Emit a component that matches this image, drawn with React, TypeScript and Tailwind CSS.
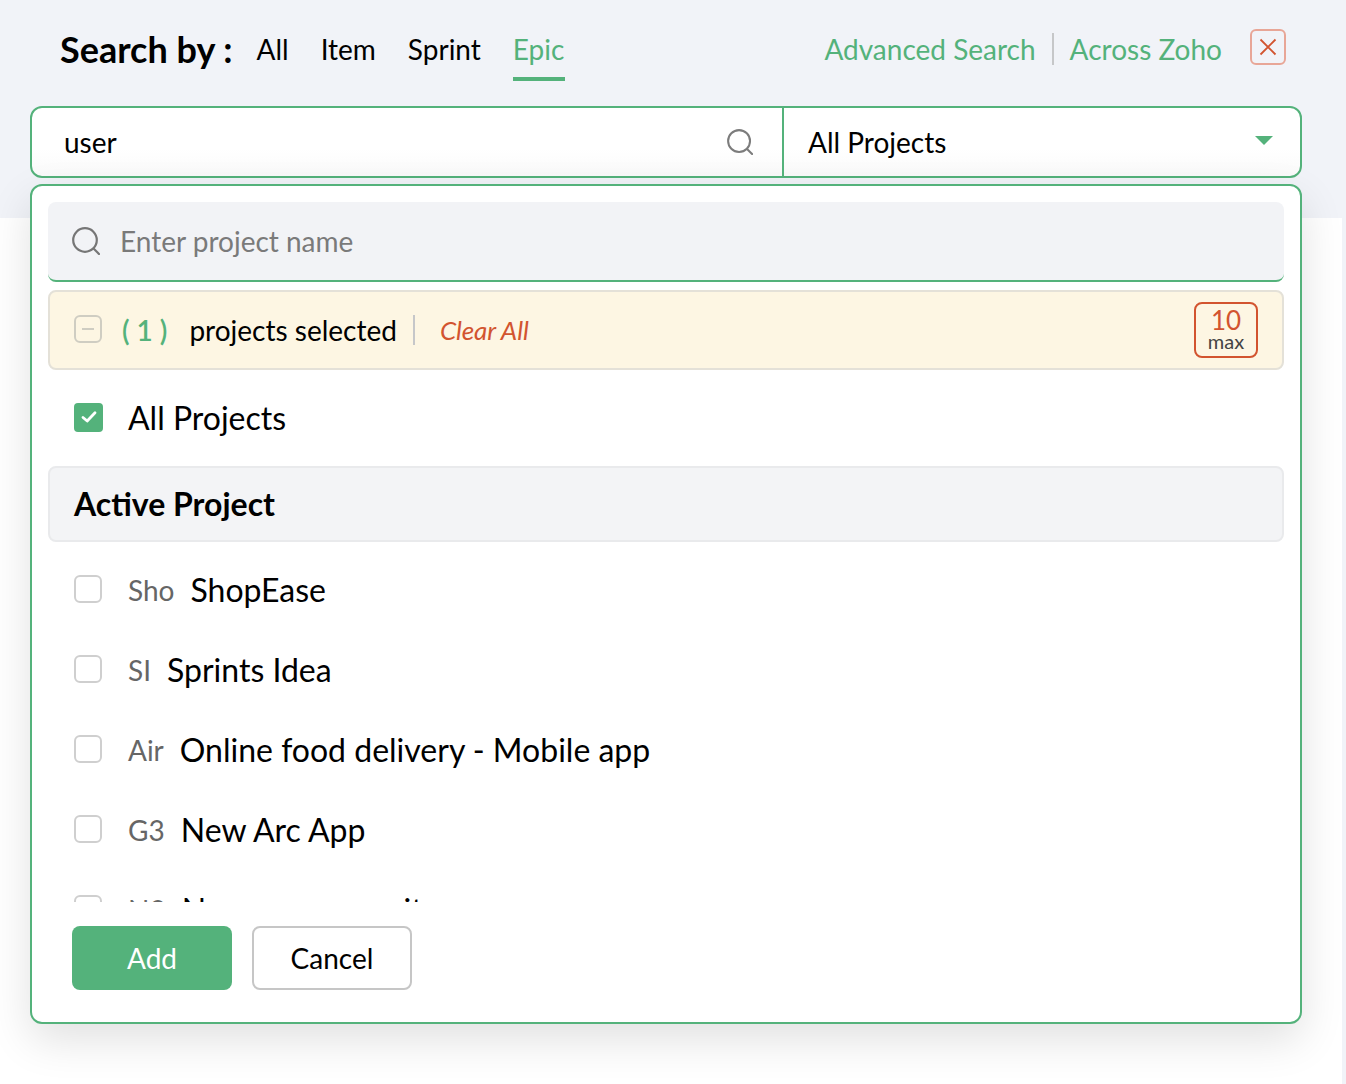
import React from "react";

const Search = ({ size, color }: { size: number; color: string }) => (
  <svg width={size} height={size} viewBox="0 0 28 28" fill="none" stroke={color} strokeWidth="2.2" strokeLinecap="round">
    <circle cx="13" cy="13" r="11.8" />
    <path d="M21.8 21.8 L27 27" />
  </svg>
);

const rows = [
  ["Sho", "ShopEase"],
  ["SI", "Sprints Idea"],
  ["Air", "Online food delivery - Mobile app"],
  ["G3", "New Arc App"],
  ["N3", "New company site"],
];

export default function App() {
  return (
    <div className="relative h-[1084px] w-[1346px] overflow-hidden bg-white font-['Lato','Liberation_Sans',sans-serif] text-black">
      <div className="absolute inset-x-0 top-0 h-[218px] bg-[#f1f3f8]" />
      <div className="absolute inset-y-0 right-0 w-1 bg-[#f1f3f8]" />
      <div className="relative px-[30px]">
        <div className="flex h-[106px] items-start">
          <span className="ml-[30px] mt-[26px] text-[36px] leading-[46px] font-bold">Search by :</span>
          <div className="ml-[24px] flex gap-[32px] text-[28px] leading-[36px]">
            <span className="mt-[31px]">All</span>
            <span className="mt-[31px]">Item</span>
            <span className="mt-[31px]">Sprint</span>
            <span className="mt-[31px] flex h-[50px] w-[52px] flex-col border-b-4 border-[#54b27b] text-[#54b27b]">Epic</span>
          </div>
          <div className="ml-auto mt-[31px] flex items-center text-[28px] leading-[36px] text-[#54b27b]">
            <span>Advanced Search</span>
            <span className="mx-4 h-8 w-0.5 bg-[#c6c7c9]" />
            <span>Across Zoho</span>
          </div>
          <div className="ml-[28px] mr-[30px] mt-[29px] flex h-9 w-9 items-center justify-center rounded-md border-2 border-[#e8a697]">
            <svg width="18" height="18" viewBox="0 0 18 18" stroke="#d2542f" strokeWidth="1.8" fill="none">
              <path d="M1.5 1.5 L16.5 16.5 M16.5 1.5 L1.5 16.5" />
            </svg>
          </div>
        </div>

        <div className="flex h-[72px] w-[1272px] rounded-xl border-2 border-[#54b27b] bg-gradient-to-b from-white from-60% to-[#fafafa]">
          <div className="flex w-[752px] items-center justify-between border-r-2 border-[#54b27b] pl-8 pr-[29px]">
            <span className="text-[28px] leading-9">user</span>
            <Search size={26} color="#7c7c7c" />
          </div>
          <div className="flex flex-1 items-center justify-between pl-6 pr-[27px]">
            <span className="text-[28px] leading-9">All Projects</span>
            <span className="mb-1 h-0 w-0 border-x-[9px] border-t-[9px] border-x-transparent border-t-[#54b27b]" />
          </div>
        </div>

        <div className="mt-[6px] flex h-[840px] w-[1272px] flex-col rounded-xl border-2 border-[#54b27b] bg-white px-4 pt-4 pb-[32px] shadow-[0_16px_44px_rgba(0,0,0,0.12)]">
          <div className="flex h-20 shrink-0 items-center gap-[20px] rounded-lg border-b-2 border-[#54b27b] bg-[#f2f3f6] pl-[24px]">
            <Search size={28} color="#767676" />
            <span className="text-[28px] leading-9 text-[#7a7a7a]">Enter project name</span>
          </div>
          <div className="mt-2 flex h-20 shrink-0 items-center rounded-lg border-2 border-[#e4e1d8] bg-[#fdf6e3] pl-6 pr-6">
            <span className="mb-0.5 flex h-7 w-7 items-center justify-center rounded-md border-2 border-[#cfcdc2]">
              <span className="h-0.5 w-3 bg-[#cfcdc2]" />
            </span>
            <span className="ml-5 text-[28px] leading-9 font-semibold whitespace-pre text-[#54b27b]">( 1 )</span>
            <span className="ml-[22px] text-[28px] leading-9">projects selected</span>
            <span className="ml-4 h-[30px] w-0.5 bg-[#c6c7c9]" />
            <span className="ml-[25px] text-[26px] leading-9 italic tracking-[-0.1px] text-[#d2542f]">Clear All</span>
            <div className="ml-auto flex h-14 w-16 flex-col items-center justify-center rounded-lg border-2 border-[#d2542f]">
              <span className="text-[26px] leading-[24px] text-[#d2542f]">10</span>
              <span className="mb-[3px] text-[20px] leading-[18px] text-[#444444]">max</span>
            </div>
          </div>

          <div className="h-[532px] shrink-0 overflow-hidden">
            <div className="flex h-24 items-center pl-[26px]">
              <span className="mb-[2px] flex h-[29px] w-[29px] items-center justify-center rounded bg-[#54b27b]">
                <svg width="18" height="18" viewBox="0 0 18 18" fill="none" stroke="white" strokeWidth="2.8" strokeLinecap="round" strokeLinejoin="round">
                  <path d="M3 9.5 L7.2 13 L15 4.8" />
                </svg>
              </span>
              <span className="ml-[25px] text-[32px] leading-10">All Projects</span>
            </div>
            <div className="flex h-[76px] items-center rounded-lg border-2 border-[#e9eaec] bg-[#f3f4f6] pl-6">
              <span className="text-[32px] leading-10 font-bold">Active Project</span>
            </div>
            <div className="mt-[8px]">
              {rows.map(([code, name]) => (
                <div key={name} className="flex h-20 items-center pl-[26px]">
                  <span className="mb-[2px] h-7 w-7 rounded-md border-2 border-[#cfcfcf]" />
                  <span className="ml-[26px] text-[28px] leading-9 text-[#666666]">{code}</span>
                  <span className="ml-4 text-[32px] leading-10">{name}</span>
                </div>
              ))}
            </div>
          </div>

          <div className="mt-[24px] flex gap-5 pl-[24px]">
            <button className="h-16 w-40 rounded-lg bg-[#54b27b] text-[28px] text-white">Add</button>
            <button className="h-16 w-40 rounded-lg border-2 border-[#c6c6c6] bg-white text-[28px] text-black">Cancel</button>
          </div>
        </div>
      </div>
    </div>
  );
}
